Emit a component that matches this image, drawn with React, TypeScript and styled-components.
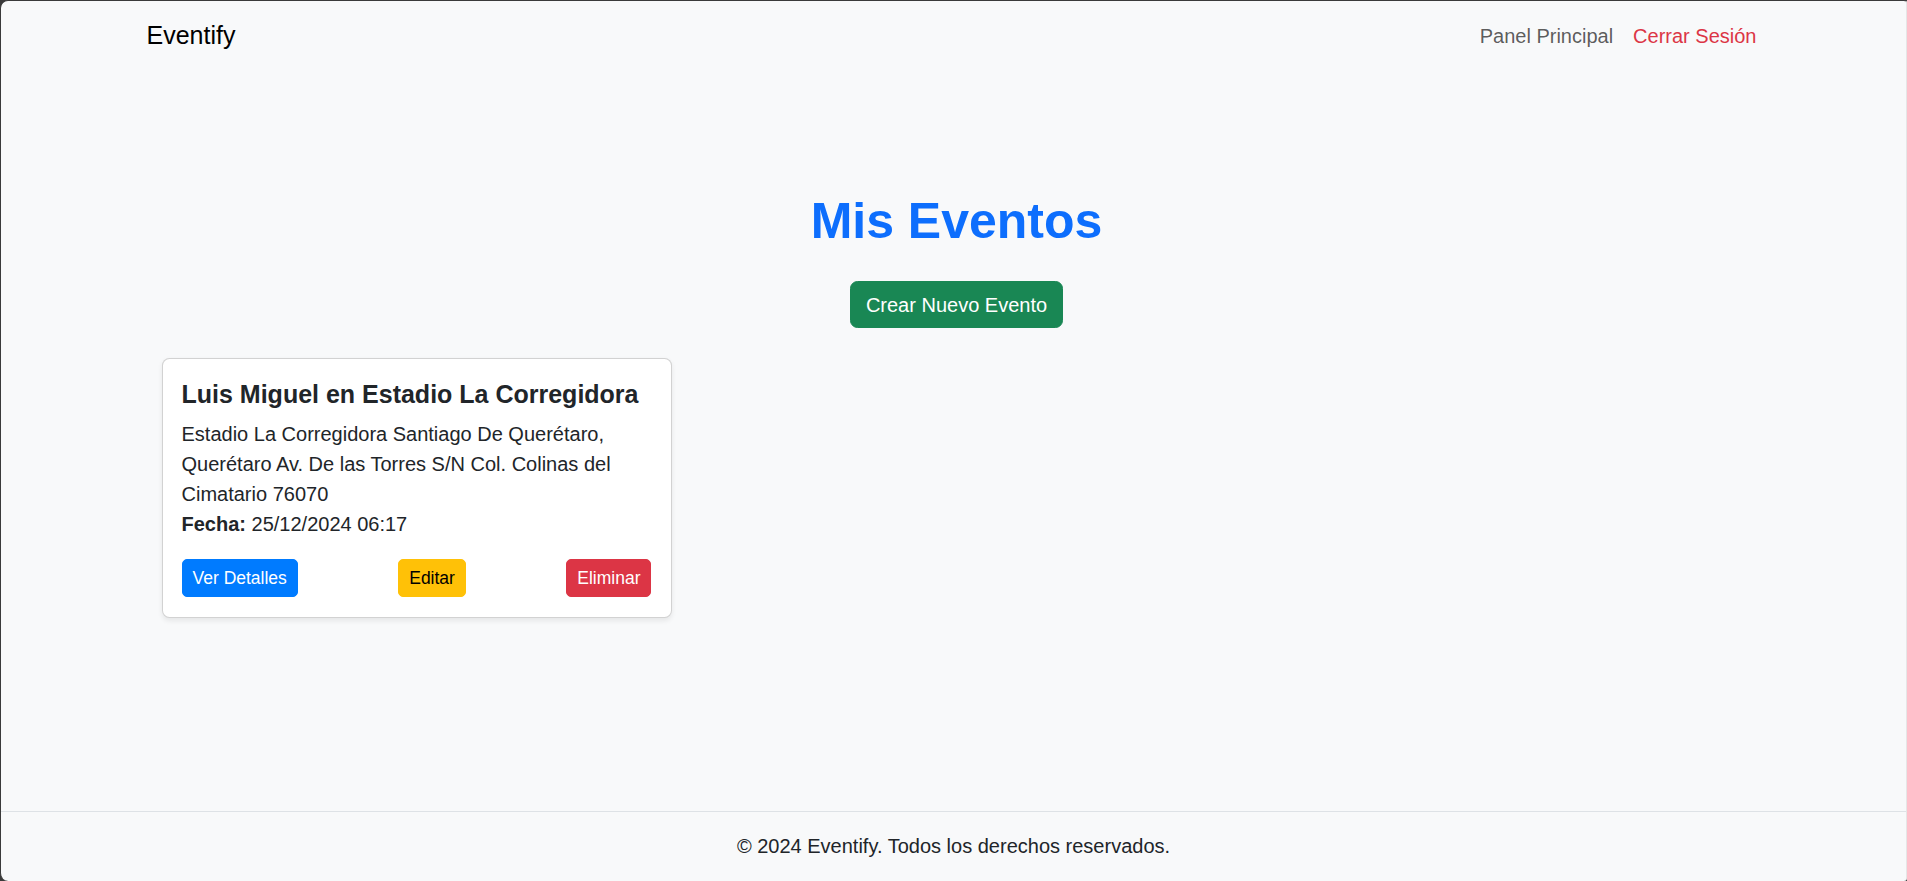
import React from 'react';
import styled, {createGlobalStyle} from "styled-components";

type EventType = {
    id: number
    title: string
    address: string
    date: string
}

const events: EventType[] = [
    {
        id: 1,
        title: 'Luis Miguel en Estadio La Corregidora',
        address: 'Estadio La Corregidora Santiago De Querétaro, Querétaro Av. De las Torres S/N Col. Colinas del Cimatario 76070',
        date: '25/12/2024 06:17',
    },
];

const colors = {
    bg: '#f8f9fa',
    text: '#212529',
    primary: '#0d6efd',
    blue: '#007bff',
    success: '#198754',
    warning: '#ffc107',
    danger: '#dc3545',
    muted: 'rgba(0, 0, 0, 0.65)',
};

const GlobalStyle = createGlobalStyle`
  html, body {
    margin: 0;
    padding: 0;
    background: #3a3a3a;
  }

  * {
    box-sizing: border-box;
  }

  body {
    font-family: "Liberation Sans", Arial, sans-serif;
    font-size: 20px;
    line-height: 1.5;
    color: ${colors.text};
  }
`

export default function App() {
    return (
        <>
            <GlobalStyle/>
            <Frame>
                <Navbar>
                    <Container>
                        <NavInner>
                            <Brand href={'#'}>Eventify</Brand>
                            <NavLinks>
                                <NavLink href={'#'}>Panel Principal</NavLink>
                                <NavLink href={'#'} danger>Cerrar Sesión</NavLink>
                            </NavLinks>
                        </NavInner>
                    </Container>
                </Navbar>

                <Main>
                    <Container>
                        <PageTitle>Mis Eventos</PageTitle>
                        <Center>
                            <Button variant={'success'}>Crear Nuevo Evento</Button>
                        </Center>

                        <CardGrid>
                            {events.map(ev => (
                                <Card key={ev.id}>
                                    <CardTitle>{ev.title}</CardTitle>
                                    <CardText>
                                        {ev.address}
                                        <br/>
                                        <strong>Fecha:</strong> {ev.date}
                                    </CardText>
                                    <CardActions>
                                        <Button small variant={'blue'}>Ver Detalles</Button>
                                        <Button small variant={'warning'}>Editar</Button>
                                        <Button small variant={'danger'}>Eliminar</Button>
                                    </CardActions>
                                </Card>
                            ))}
                        </CardGrid>
                    </Container>
                </Main>

                <Footer>
                    © 2024 Eventify. Todos los derechos reservados.
                </Footer>
            </Frame>
        </>
    );
}

const Frame = styled.div`
  min-height: 100vh;
  display: flex;
  flex-direction: column;
  background: ${colors.bg};
  border-top: 1px solid #3a3a3a;
  border-left: 1px solid #3a3a3a;
  border-right: 1px solid #e6e6e6;
  border-radius: 8px 3px 3px 8px;
  overflow: hidden;
`

const Container = styled.div`
  width: 100%;
  max-width: 1650px;
  margin: 0 auto;
  padding: 0 12px 0 18px;
`

const Navbar = styled.nav`
  padding: 10px 0;
`

const NavInner = styled.div`
  display: flex;
  align-items: center;
  justify-content: space-between;
`

const Brand = styled.a`
  font-size: 25px;
  line-height: 37.5px;
  padding: 6px 0;
  color: #000;
  text-decoration: none;
`

const NavLinks = styled.div`
  display: flex;
`

const NavLink = styled.a<{ danger?: boolean }>`
  padding: 10px;
  line-height: 30px;
  color: ${props => props.danger ? colors.danger : colors.muted};
  text-decoration: none;
`

const Main = styled.main`
  flex-grow: 1;
  padding-top: 120px;
`

const PageTitle = styled.h1`
  margin: 0 0 30px;
  text-align: center;
  font-size: 50px;
  line-height: 1.2;
  font-weight: 700;
  color: ${colors.primary};
`

const Center = styled.div`
  display: flex;
  justify-content: center;
  margin-bottom: 30px;
`

const CardGrid = styled.div`
  display: grid;
  grid-template-columns: repeat(3, 1fr);
  gap: 30px;
  padding: 0 15px;
`

const Card = styled.div`
  background: #fff;
  border: 1px solid rgba(0, 0, 0, 0.175);
  border-radius: 7.5px;
  box-shadow: 0 2.5px 5px rgba(0, 0, 0, 0.075);
  padding: 20px 19px;
`

const CardTitle = styled.h5`
  margin: 0 0 10px;
  font-size: 25px;
  line-height: 1.2;
  font-weight: 700;
`

const CardText = styled.p`
  margin: 0 0 20px;
`

const CardActions = styled.div`
  display: flex;
  justify-content: space-between;
`

const variants = {
    success: {bg: colors.success, fg: '#fff'},
    blue: {bg: colors.blue, fg: '#fff'},
    warning: {bg: colors.warning, fg: '#000'},
    danger: {bg: colors.danger, fg: '#fff'},
};

const Button = styled.button<{ variant: keyof typeof variants, small?: boolean }>`
  font-family: inherit;
  border: 1px solid ${props => variants[props.variant].bg};
  background: ${props => variants[props.variant].bg};
  color: ${props => variants[props.variant].fg};
  font-size: ${props => props.small ? '17.5px' : '20px'};
  line-height: 1.5;
  padding: ${props => props.small ? '5px 10px' : '7.5px 15px'};
  border-radius: ${props => props.small ? '5px' : '7.5px'};
  cursor: pointer;
`

const Footer = styled.footer`
  border-top: 1px solid #dee2e6;
  padding: 19px 0 20px;
  text-align: center;
  color: ${colors.text};
`
